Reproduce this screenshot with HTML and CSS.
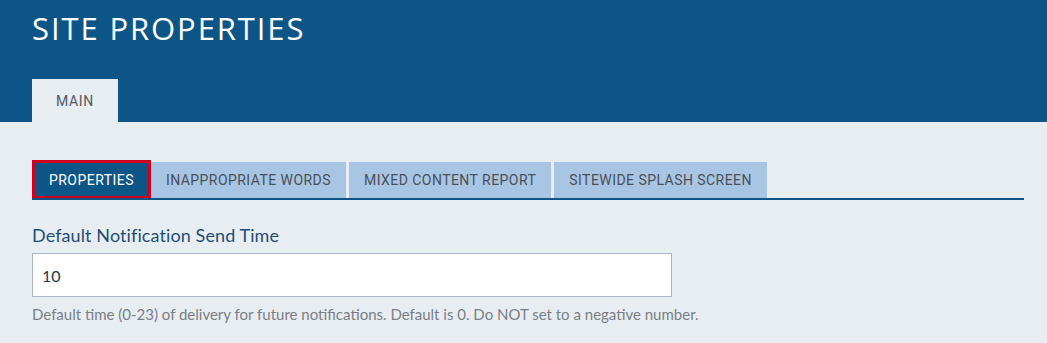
FILE: index.html
```html
<!DOCTYPE html>
<html lang="en">
<head>
    <meta charset="UTF-8">
    <meta name="viewport" content="width=device-width, initial-scale=1.0">
    <title>Site Properties</title>
    <link rel="stylesheet" href="styles.css">
</head>
<body>
    <div class="page-header">
        <h1>SITE PROPERTIES</h1>
        <div class="main-tabs">
            <span class="main-tab">MAIN</span>
        </div>
    </div>
    <div class="content">
        <div class="sub-tabs">
            <span class="sub-tab active">PROPERTIES</span>
            <span class="sub-tab">INAPPROPRIATE WORDS</span>
            <span class="sub-tab">MIXED CONTENT REPORT</span>
            <span class="sub-tab">SITEWIDE SPLASH SCREEN</span>
        </div>
        <div class="form-group">
            <label for="sendTime">Default Notification Send Time</label>
            <input type="text" id="sendTime" value="10">
            <p class="help">Default time (0-23) of delivery for future notifications. Default is 0. Do NOT set to a negative number.</p>
        </div>
    </div>
</body>
</html>
```

FILE: styles.css
```css
body {
    margin: 0;
    font-family: "Lato", sans-serif;
    background-color: #e8edf2;
}
.page-header {
    background-color: #0c5586;
    padding: 0 32px;
    height: 122px;
    display: flex;
    flex-direction: column;
    justify-content: space-between;
}
.page-header h1 {
    margin: 12px 0 0 0;
    color: #ffffff;
    font-family: "Open Sans", sans-serif;
    font-weight: 400;
    font-size: 31px;
    letter-spacing: 1.9px;
    line-height: 32px;
}
.main-tabs {
    display: flex;
}
.main-tab {
    background-color: #e8edf2;
    color: #555a60;
    font-family: "Roboto", sans-serif;
    font-size: 14px;
    letter-spacing: 0.7px;
    width: 86px;
    height: 43px;
    line-height: 45px;
    text-align: center;
}
.content {
    padding: 38px 23px 0 32px;
}
.sub-tabs {
    display: flex;
    gap: 3px;
    border-bottom: 2px solid #0c5586;
    height: 38px;
    align-items: flex-end;
}
.sub-tab {
    background-color: #a8c5e3;
    color: #4a5058;
    font-family: "Roboto", sans-serif;
    font-size: 14px;
    letter-spacing: 0.45px;
    height: 36px;
    line-height: 36px;
    padding: 0 15px;
}
.sub-tab.active {
    background-color: #0c5586;
    color: #ffffff;
    border: 3px solid #d0021b;
    border-bottom-width: 2px;
    height: 33px;
    line-height: 35px;
    padding: 0 14px;
    margin-right: -3px;
}
.form-group {
    margin-top: 24px;
}
.form-group label {
    display: block;
    color: #1f4e75;
    font-size: 18px;
    letter-spacing: 0.1px;
    margin-bottom: 7px;
}
.form-group input {
    display: block;
    box-sizing: border-box;
    width: 640px;
    height: 44px;
    padding: 0 9px;
    border: 1px solid #aab6c3;
    background-color: #ffffff;
    color: #2b3440;
    font-family: "Lato", sans-serif;
    font-size: 16px;
}
.help {
    margin: 8px 0 0 0;
    color: #7a7f85;
    font-size: 15px;
}
```
